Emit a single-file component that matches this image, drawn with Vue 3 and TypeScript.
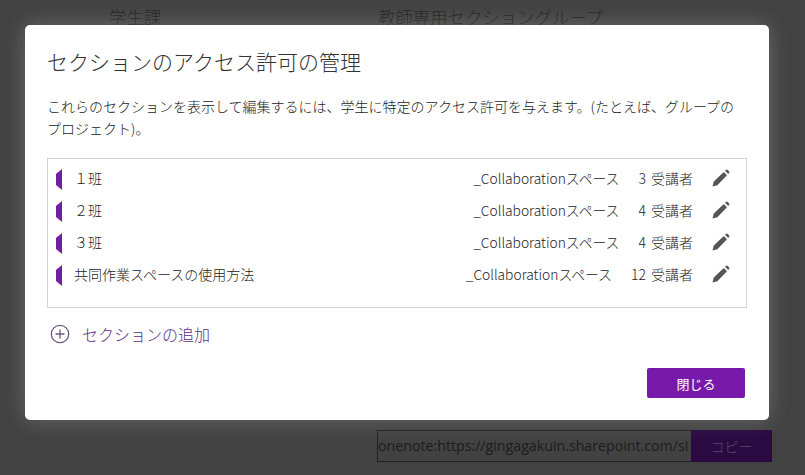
<script setup lang="ts">
interface Row { name: string; space: string; count: string }
const rows: Row[] = [
  { name: '１班', space: '_Collaborationスペース', count: '3 受講者' },
  { name: '２班', space: '_Collaborationスペース', count: '4 受講者' },
  { name: '３班', space: '_Collaborationスペース', count: '4 受講者' },
  { name: '共同作業スペースの使用方法', space: '_Collaborationスペース', count: '12 受講者' },
]
</script>

<template>
  <div class="page">
    <div class="heads">
      <span class="head-a">学生課</span>
      <span>教師専用セクショングループ</span>
    </div>
    <div class="link">
      <div class="link-input">onenote:https://gingagakuin.sharepoint.com/si</div>
      <div class="link-btn">コピー</div>
    </div>
    <div class="modal">
      <h1 class="title">セクションのアクセス許可の管理</h1>
      <p class="desc">これらのセクションを表示して編集するには、学生に特定のアクセス許可を与えます。(たとえば、グループのプロジェクト)。</p>
      <div class="list">
        <div v-for="r in rows" :key="r.name" class="row">
          <svg class="tab" width="6" height="21" viewBox="0 0 6 21"><path d="M6 0V21L0 16V5Z" fill="#6f1fa0" /></svg>
          <span class="name">{{ r.name }}</span>
          <span class="space">{{ r.space }}</span>
          <span class="count">{{ r.count }}</span>
          <svg class="pen" width="18" height="18" viewBox="0 0 18 18">
            <path d="M0.5 17.5L1.8 12.6L11.8 3L15 6.2L5.4 16.2Z" fill="#555" />
            <path d="M13 1.8L14.2 0.7Q15 0.2 15.7 0.9L17.1 2.3Q17.7 3 17.2 3.8L16.2 5Z" fill="#555" />
          </svg>
        </div>
      </div>
      <div class="add">
        <svg width="20" height="20" viewBox="0 0 20 20" fill="none" stroke="#6f5a80" stroke-width="1.3">
          <circle cx="10" cy="10" r="8.7" />
          <path d="M10 5.5V14.5M5.5 10H14.5" />
        </svg>
        <span>セクションの追加</span>
      </div>
      <div class="actions">
        <button class="close" type="button">閉じる</button>
      </div>
    </div>
  </div>
</template>

<style scoped>
.page {
  position: relative;
  width: 805px;
  height: 475px;
  overflow: hidden;
  background: #424242;
  font-family: "Noto Sans CJK JP", "Open Sans", sans-serif;
  font-weight: 300;
  color: #333;
  display: flex;
  flex-direction: column;
  justify-content: space-between;
}
.heads {
  display: flex;
  padding: 4px 0 0 109px;
  font-size: 17.4px;
  line-height: 25px;
  color: #222;
}
.head-a { width: 269px; }
.link {
  display: flex;
  margin: 0 0 13px 377px;
  height: 32px;
}
.link-input {
  width: 314px;
  box-sizing: border-box;
  border: 1px solid #222;
  border-right: 0;
  font-family: "Open Sans", sans-serif;
  font-size: 14.2px;
  font-weight: 400;
  line-height: 30px;
  color: #1c1c1c;
  white-space: nowrap;
  overflow: hidden;
}
.link-btn {
  width: 81px;
  background: #2a0a40;
  color: #5c4a6a;
  font-size: 14px;
  line-height: 32px;
  text-align: center;
}
.modal {
  position: absolute;
  left: 25px;
  top: 25px;
  width: 744px;
  height: 395px;
  box-sizing: border-box;
  padding: 21px 22px 0;
  background: #fff;
  border-radius: 5px;
  box-shadow: 0 0 22px rgba(255, 255, 255, 0.22);
}
.title {
  margin: 0;
  font-size: 21px;
  font-weight: 300;
  line-height: 31px;
  color: #333;
}
.desc {
  margin: 18px 0 0;
  width: 700px;
  font-size: 14px;
  font-weight: 300;
  line-height: 22px;
  color: #222;
}
.list {
  margin-top: 19px;
  width: 700px;
  height: 150px;
  box-sizing: border-box;
  border: 1px solid #d4d4d4;
  padding: 4px 8px 0;
}
.row {
  display: flex;
  align-items: center;
  height: 32px;
  font-size: 14px;
  font-weight: 300;
  color: #222;
}
.tab { flex: none; }
.name { margin-left: 12px; flex: 1; white-space: nowrap; padding-bottom: 2px; }
.space { white-space: nowrap; font-size: 13.8px; padding-bottom: 2px; }
.count { margin-left: 19px; white-space: nowrap; word-spacing: 2px; padding-bottom: 2px; }
.pen { flex: none; margin: -2px 8px 0 19px; }
.add {
  display: flex;
  align-items: center;
  gap: 12px;
  margin: 16px 0 0 3px;
  height: 20px;
  font-size: 16px;
  font-weight: 300;
  color: #5e2a82;
}
.actions {
  display: flex;
  justify-content: flex-end;
  margin: 24px 2px 0 0;
}
.close {
  width: 98px;
  height: 30px;
  border: 0;
  border-radius: 2px;
  background: #7719aa;
  color: #fff;
  font-family: inherit;
  font-size: 13px;
  font-weight: 400;
}
</style>

<style>
html, body { margin: 0; background: #424242; }
</style>
